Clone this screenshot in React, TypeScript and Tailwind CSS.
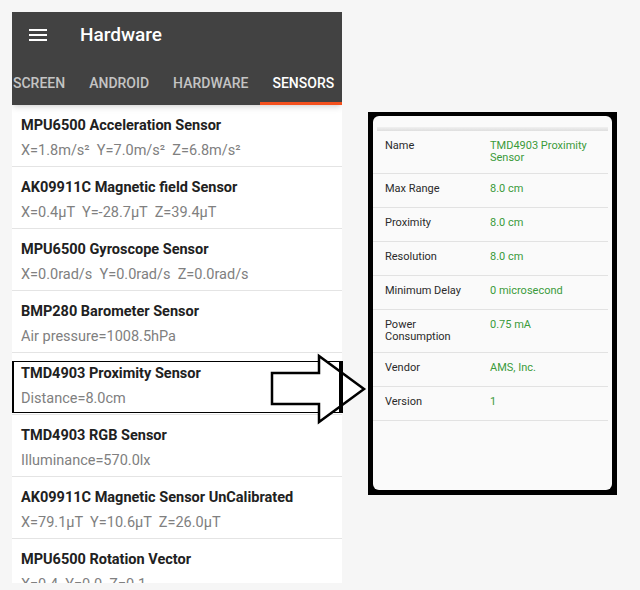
import React from 'react';

const sensors = [
  { name: 'MPU6500 Acceleration Sensor', value: 'X=1.8m/s²  Y=7.0m/s²  Z=6.8m/s²' },
  { name: 'AK09911C Magnetic field Sensor', value: 'X=0.4μT  Y=-28.7μT  Z=39.4μT' },
  { name: 'MPU6500 Gyroscope Sensor', value: 'X=0.0rad/s  Y=0.0rad/s  Z=0.0rad/s' },
  { name: 'BMP280 Barometer Sensor', value: 'Air pressure=1008.5hPa' },
  { name: 'TMD4903 Proximity Sensor', value: 'Distance=8.0cm' },
  { name: 'TMD4903 RGB Sensor', value: 'Illuminance=570.0lx' },
  { name: 'AK09911C Magnetic Sensor UnCalibrated', value: 'X=79.1μT  Y=10.6μT  Z=26.0μT' },
  { name: 'MPU6500 Rotation Vector', value: 'X=0.4  Y=0.0  Z=0.1' },
];

const details = [
  { label: 'Name', value: 'TMD4903 Proximity Sensor' },
  { label: 'Max Range', value: '8.0 cm' },
  { label: 'Proximity', value: '8.0 cm' },
  { label: 'Resolution', value: '8.0 cm' },
  { label: 'Minimum Delay', value: '0 microsecond' },
  { label: 'Power Consumption', value: '0.75 mA' },
  { label: 'Vendor', value: 'AMS, Inc.' },
  { label: 'Version', value: '1' },
];

const tabs = ['SCREEN', 'ANDROID', 'HARDWARE', 'SENSORS'];

function MenuIcon() {
  return (
    <svg width="24" height="24" viewBox="0 0 24 24" fill="white">
      <path d="M3 18h18v-2H3v2zm0-5h18v-2H3v2zm0-7v2h18V6H3z" />
    </svg>
  );
}

export default function App() {
  return (
    <div
      className="relative w-[640px] h-[590px] bg-[#f6f6f6] overflow-hidden flex items-start"
      style={{ fontFamily: 'Roboto, "Noto Sans", sans-serif' }}
    >
      {/* phone screen */}
      <div className="ml-[12px] mt-[12px] w-[330px] h-[571px] bg-white overflow-hidden flex flex-col">
        <div className="bg-[#424242] shadow-md relative z-10">
          <div className="h-[46px] flex items-center pl-[14px]">
            <MenuIcon />
            <span className="ml-[30px] text-white text-[19px] font-medium">Hardware</span>
          </div>
          <div className="h-[47px] overflow-hidden">
            <div className="flex -ml-[11px] h-full">
              {tabs.map((t) => (
                <div
                  key={t}
                  className={`relative px-3 flex items-center shrink-0 text-[14px] font-medium pt-[3px] ${
                    t === 'SENSORS' ? 'text-white' : 'text-[#c4c4c4]'
                  }`}
                >
                  {t}
                  {t === 'SENSORS' && (
                    <div className="absolute left-0 right-0 bottom-0 h-[3px] bg-[#f4511e]" />
                  )}
                </div>
              ))}
            </div>
          </div>
        </div>
        <div className="flex flex-col">
          {sensors.map((s) => (
            <div key={s.name} className="pl-[9px] pt-[11px] border-b border-[#e4e4e4] h-[62px] shrink-0">
              <div className="text-[14.5px] leading-[20px] font-bold text-[#212121] whitespace-nowrap">{s.name}</div>
              <div className="mt-[5px] text-[14.5px] leading-[20px] text-[#808080] whitespace-pre">{s.value}</div>
            </div>
          ))}
        </div>
      </div>

      {/* detail dialog */}
      <div className="ml-[26px] mt-[112px] w-[249px] h-[383px] bg-black pl-[5px] pr-[5px] pt-[4px] pb-[5px]">
        <div className="w-full h-full bg-[#fafafa] rounded-[6px] pt-[11px]">
          <div className="mx-[4px] h-[4px] bg-gradient-to-b from-[#f0f0f0] to-[#dedede]" />
          {details.map((d) => (
            <div
              key={d.label}
              className="flex items-start min-h-[34px] pt-[9px] pb-[9px] pl-3 mr-[4px] border-b border-[#e2e2e2] text-[11px] leading-[12px]"
            >
              <div className="w-[105px] shrink-0 text-[#2a2a2a] pr-2">{d.label}</div>
              <div className="flex-1 text-[#3a9b3a] pr-2">{d.value}</div>
            </div>
          ))}
        </div>
      </div>

      {/* highlight box over the proximity row */}
      <div className="absolute left-[12px] top-[361px] w-[331px] h-[52px] border-y border-l-2 border-black" />
      <svg className="absolute left-0 top-0" width="640" height="590">
        <polygon
          points="272,373 319,373 319,356 364,389 319,422 319,404 272,404"
          fill="white"
          stroke="black"
          strokeWidth="2.5"
          strokeLinejoin="miter"
        />
      </svg>
      <div className="absolute left-[339px] top-[361px] w-[4px] h-[52px] bg-black" />
    </div>
  );
}
